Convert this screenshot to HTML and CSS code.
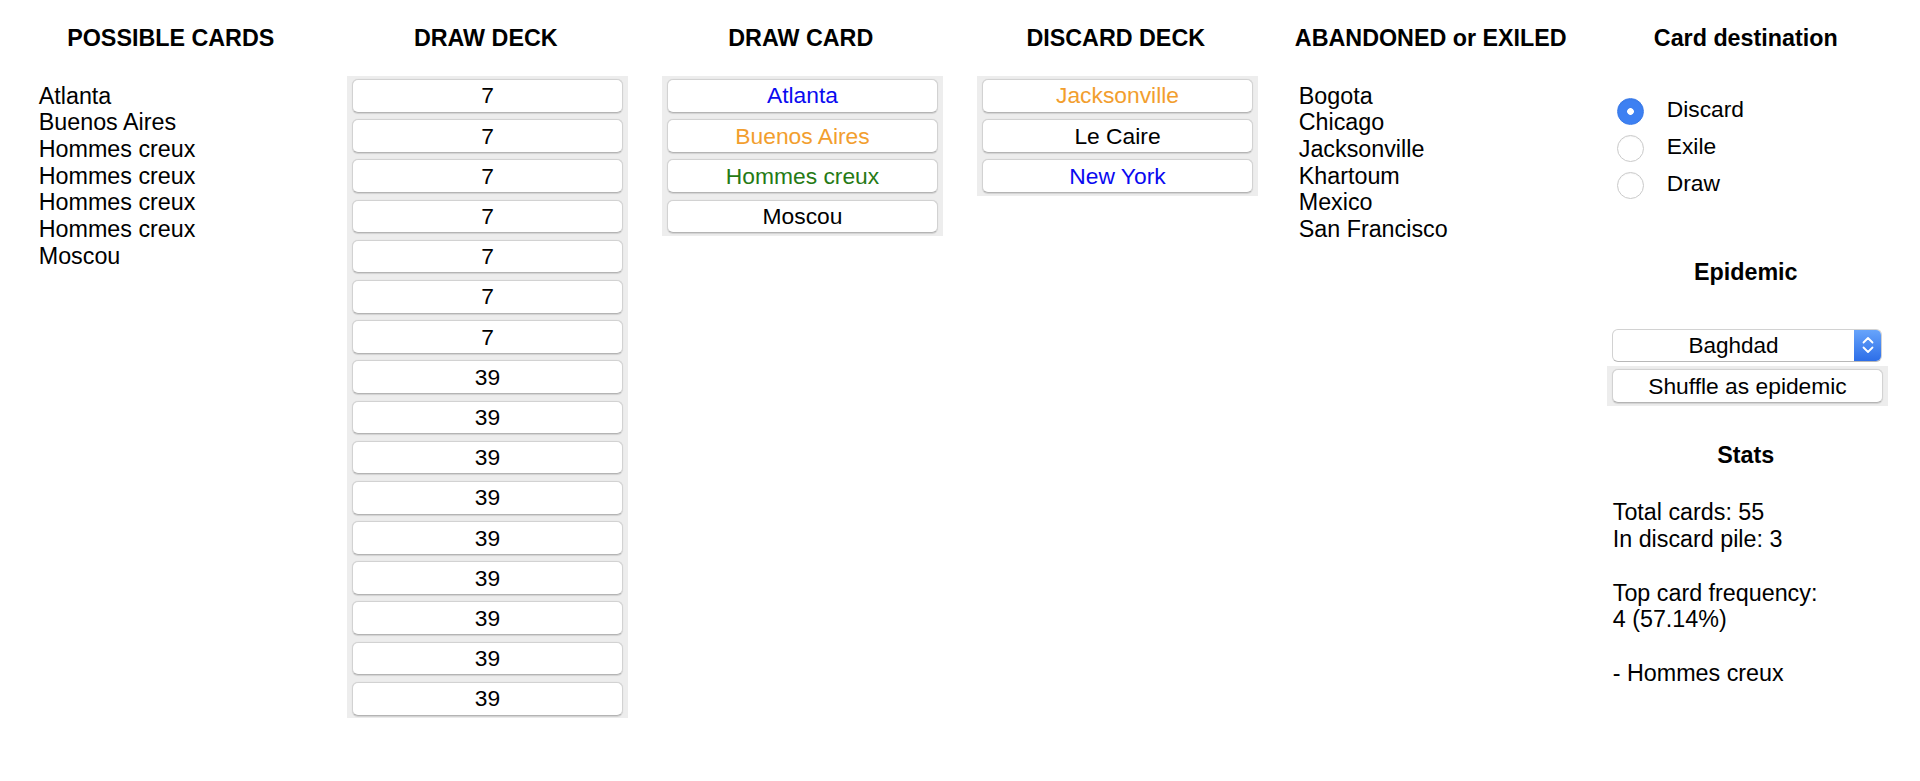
FILE: index.html
```html
<!DOCTYPE html>
<html lang="fr">
<head>
<meta charset="utf-8">
<title>Deck tracker</title>
<link rel="stylesheet" href="styles.css">
</head>
<body>
<div class="board">
  <section class="col">
    <h2 class="col-title">POSSIBLE CARDS</h2>
    <ul class="names">
      <li>Atlanta</li>
      <li>Buenos Aires</li>
      <li>Hommes creux</li>
      <li>Hommes creux</li>
      <li>Hommes creux</li>
      <li>Hommes creux</li>
      <li>Moscou</li>
    </ul>
  </section>

  <section class="col">
    <h2 class="col-title">DRAW DECK</h2>
    <div class="pile">
      <button class="card">7</button>
      <button class="card">7</button>
      <button class="card">7</button>
      <button class="card">7</button>
      <button class="card">7</button>
      <button class="card">7</button>
      <button class="card">7</button>
      <button class="card">39</button>
      <button class="card">39</button>
      <button class="card">39</button>
      <button class="card">39</button>
      <button class="card">39</button>
      <button class="card">39</button>
      <button class="card">39</button>
      <button class="card">39</button>
      <button class="card">39</button>
    </div>
  </section>

  <section class="col">
    <h2 class="col-title">DRAW CARD</h2>
    <div class="pile">
      <button class="card c-blue">Atlanta</button>
      <button class="card c-orange">Buenos Aires</button>
      <button class="card c-green">Hommes creux</button>
      <button class="card">Moscou</button>
    </div>
  </section>

  <section class="col">
    <h2 class="col-title">DISCARD DECK</h2>
    <div class="pile">
      <button class="card c-orange">Jacksonville</button>
      <button class="card">Le Caire</button>
      <button class="card c-blue">New York</button>
    </div>
  </section>

  <section class="col">
    <h2 class="col-title">ABANDONED or EXILED</h2>
    <ul class="names">
      <li>Bogota</li>
      <li>Chicago</li>
      <li>Jacksonville</li>
      <li>Khartoum</li>
      <li>Mexico</li>
      <li>San Francisco</li>
    </ul>
  </section>

  <section class="col">
    <h2 class="col-title">Card destination</h2>
    <div class="dest">
      <label class="dest-opt"><input class="dest-radio" type="radio" name="dest" checked><span>Discard</span></label>
      <label class="dest-opt"><input class="dest-radio" type="radio" name="dest"><span>Exile</span></label>
      <label class="dest-opt"><input class="dest-radio" type="radio" name="dest"><span>Draw</span></label>
    </div>

    <h2 class="col-title epi-title">Epidemic</h2>
    <div class="select">
      <span class="select-value">Baghdad</span>
      <span class="select-arrows">
        <svg width="14" height="22" viewBox="0 0 14 22" aria-hidden="true">
          <path d="M2.5 8.5 L7 4 L11.5 8.5" fill="none" stroke="#fff" stroke-width="1.8" stroke-linecap="round" stroke-linejoin="round"/>
          <path d="M2.5 13.5 L7 18 L11.5 13.5" fill="none" stroke="#fff" stroke-width="1.8" stroke-linecap="round" stroke-linejoin="round"/>
        </svg>
      </span>
    </div>
    <div class="pile pile-action">
      <button class="card">Shuffle as epidemic</button>
    </div>

    <h2 class="col-title stats-title">Stats</h2>
    <p class="stats">Total cards: 55<br>In discard pile: 3<br><br>Top card frequency:<br>4 (57.14%)<br><br>- Hommes creux</p>
  </section>
</div>
</body>
</html>
```
FILE: styles.css
```css
html, body {
  margin: 0;
  background: #fff;
}

body {
  font-family: "Liberation Sans", Arial, sans-serif;
  color: #000;
}

.board {
  display: grid;
  grid-template-columns: repeat(6, 315px);
  align-items: start;
  padding: 25.3px 0 0 13.25px;
}

.col {
  display: flex;
  flex-direction: column;
}

.col-title {
  margin: 0 0 23.5px;
  font-size: 23.3px;
  line-height: 26.7px;
  font-weight: 700;
  text-align: center;
}

.names {
  list-style: none;
  margin: 7px 0 0;
  padding: 0 0 0 25.5px;
  font-size: 23.3px;
  line-height: 26.7px;
}

.pile {
  margin-left: 19px;
  width: 280.5px;
  box-sizing: border-box;
  background: #ededed;
  padding: 3.5px 4.5px 2.5px;
  display: flex;
  flex-direction: column;
  gap: 6.5px;
}

.card {
  height: 33.7px;
  box-sizing: border-box;
  background: #fff;
  border: 1px solid #d2d2d2;
  border-bottom-color: #b4b4b4;
  border-radius: 6px;
  box-shadow: 0 0.5px 1px rgba(0, 0, 0, 0.12);
  padding: 0;
  margin: 0;
  font-family: "Liberation Sans", Arial, sans-serif;
  font-size: 22.8px;
  line-height: 1;
  color: #000;
  text-align: center;
}

.c-blue { color: #0a0af0; }
.c-orange { color: #f29e2e; }
.c-green { color: #257a14; }

.dest {
  margin-top: 15.8px;
}

.dest-opt {
  display: flex;
  align-items: center;
  height: 36.7px;
  padding-left: 29px;
  font-size: 22.8px;
  line-height: 36.7px;
}

.dest-radio {
  appearance: none;
  -webkit-appearance: none;
  width: 27px;
  height: 27px;
  margin: 4px 22.5px 0 0;
  box-sizing: border-box;
  border-radius: 50%;
  border: 1px solid #cacaca;
  background: #fff;
  box-shadow: inset 0 1px 1px rgba(0, 0, 0, 0.04);
}

.dest-radio:checked {
  border-color: #3a7ae8;
  background: radial-gradient(circle at center, #fff 0 3px, #3d80f2 3.7px);
}

.epi-title {
  margin-top: 57.4px;
}

.select {
  margin: 19.7px 0 0 23.5px;
  width: 270px;
  height: 33px;
  box-sizing: border-box;
  display: flex;
  background: #fff;
  border: 1px solid #d2d2d2;
  border-bottom-color: #b8b8b8;
  border-radius: 6px;
  overflow: hidden;
}

.select-value {
  flex: 1;
  text-align: center;
  font-size: 22.5px;
  line-height: 31px;
}

.select-arrows {
  width: 26.5px;
  display: flex;
  align-items: center;
  justify-content: center;
  background: linear-gradient(#67a4fb, #2d6ee8);
}

.pile-action {
  margin-top: 4.3px;
}

.stats-title {
  margin-top: 36.6px;
}

.stats {
  margin: 7px 0 0;
  padding-left: 24.5px;
  font-size: 23.3px;
  line-height: 26.7px;
}
```
